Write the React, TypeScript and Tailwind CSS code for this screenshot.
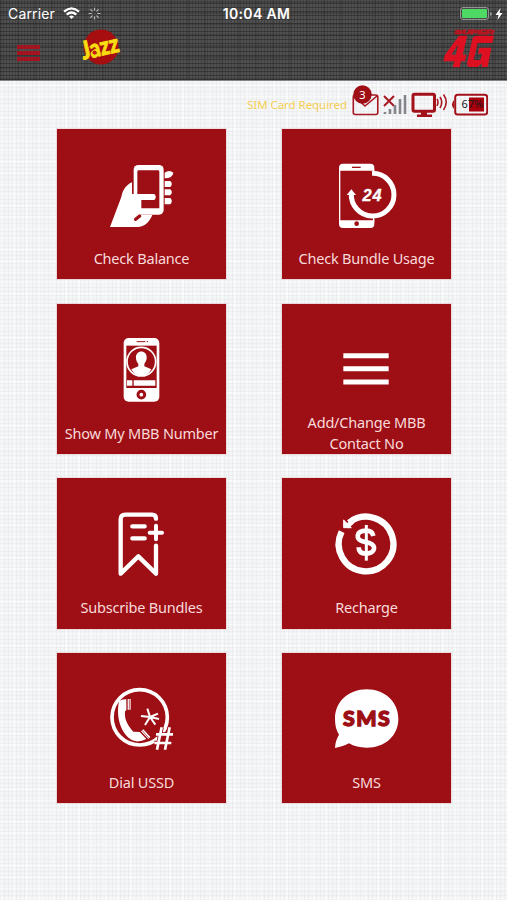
import type { ReactNode } from "react";
import { Loader } from "lucide-react";

type Tile = {
  label: string;
  icon: ReactNode;
};

const RED = "#9d0e15";

// All tile icons are drawn on the same 192 x 198 grid.
function TileIcon({ children }: { children: ReactNode }) {
  return (
    <svg
      width="64"
      height="66"
      viewBox="180 120 192 198"
      fill="none"
      stroke="none"
      className="mt-[33.500px] shrink-0 overflow-visible"
      aria-hidden="true"
    >
      {children}
    </svg>
  );
}

function BalanceIcon() {
  return (
    <TileIcon>
      <path
        d="M180 312L214 222C218 201 228 186 246 178V212L274 230V276H307C298 296 285 312 262 312Z"
        fill="#fff"
      />
      <rect x="251" y="126" width="90" height="149" rx="14" fill="#fff" />
      <path d="M266 142H324Q328 142 328 146V256H274V230H262V146Q262 142 266 142Z" fill={RED} />
      <path d="M247 213H313Q322 222 313 231H247Z" fill="#fff" />
      <path d="M257 289L269 279" stroke={RED} strokeWidth="10" strokeLinecap="round" />
      <path
        d="M344 149Q358 139 370 149Q368 166 344 166ZM344 174H361Q370 183 361 192H344ZM344 199H361Q370 208 361 217H344ZM344 225H361Q370 234 361 244H344Z"
        fill="#fff"
      />
    </TileIcon>
  );
}

function UsageIcon() {
  return (
    <TileIcon>
      <path
        d="M192 143V134Q192 122 204 122H286Q298 122 298 134V143ZM192 292H298V302Q298 315 286 315H204Q192 315 192 302Z"
        fill="#fff"
      />
      <path d="M194 140V296M296 140V155M296 280V296" stroke="#fff" strokeWidth="4" />
      <path d="M231 133H257" stroke={RED} strokeWidth="4" />
      <circle cx="245" cy="302" r="7" fill={RED} />
      <path d="M291 151A64 64 0 1 1 229 211" stroke="#fff" strokeWidth="15" />
      <path d="M215 216L229 199L243 216Z" fill="#fff" />
      <text
        x="291"
        y="235"
        textAnchor="middle"
        textLength="57"
        fill="#fff"
        stroke="#fff"
        strokeWidth="1"
        fontSize="49"
        className="font-['Liberation_Sans',sans-serif] font-bold italic"
      >
        24
      </text>
    </TileIcon>
  );
}

function NumberIcon() {
  return (
    <TileIcon>
      <rect x="221" y="123" width="107" height="191" rx="15" fill="#fff" />
      <rect x="229" y="146" width="91" height="127" fill={RED} />
      <path d="M260 134H286M290 134H294" stroke={RED} strokeWidth="3" />
      <circle cx="274" cy="194" r="43" stroke="#fff" strokeWidth="5" />
      <path
        d="M258 184C255 157 293 157 290 184C290 192 285 197 283 201V208L304 217Q294 237 274 237Q254 237 244 217L265 208V201C262 197 258 192 258 184Z"
        fill="#fff"
      />
      <path d="M231 250H247V266H231ZM251 250H316V266H251Z" fill="#fff" />
      <circle cx="274" cy="293" r="10" stroke={RED} strokeWidth="9" />
    </TileIcon>
  );
}

function MenuIcon() {
  return (
    <TileIcon>
      <path d="M205 176H341M205 215H341M205 255H341" stroke="#fff" strokeWidth="15" />
    </TileIcon>
  );
}

function SubscribeIcon() {
  return (
    <TileIcon>
      <g stroke="#fff" strokeWidth="13" strokeLinecap="round" strokeLinejoin="round">
        <path d="M318 140Q318 128 306 128H226Q212 128 212 142V305L265 253L318 305V221" />
        <path d="M247 163H284M247 199H284" />
        <path d="M318 161V202M299 182H336" strokeWidth="12" />
      </g>
    </TileIcon>
  );
}

function RechargeIcon() {
  return (
    <TileIcon>
      <path d="M200 179A82 82 0 1 0 222 152" stroke="#fff" strokeWidth="19" />
      <path d="M206 144V167H229Z" fill="#fff" stroke="#fff" strokeWidth="3" />
      <path d="M215 164L232 149" stroke="#fff" strokeWidth="14" />
      <path
        d="M295 192C293 180 286 176 273 176C242 176 242 203 262 208L283 213C306 220 300 245 273 245C258 245 251 238 251 226"
        stroke="#fff"
        strokeWidth="14"
      />
      <path d="M274 159V266" stroke="#fff" strokeWidth="9" />
    </TileIcon>
  );
}

function UssdIcon() {
  return (
    <TileIcon>
      <circle cx="269" cy="211" r="83" stroke="#fff" strokeWidth="11" />
      <path
        d="M207 163Q217 155 229 157V190L225 193C222 219 236 239 250 254L269 255L289 276Q267 288 247 280C213 262 197 210 207 163Z"
        fill="#fff"
      />
      <path d="M233 156H242V188H233ZM273 253L280 247L301 270L295 276Z" fill="#fff" />
      <path d="M238 157V188M276 250L297 274" stroke={RED} strokeWidth="2" />
      <path
        d="M300 210L292 185M300 210L324 200M300 210L327 216M300 210L285 234M300 210L273 207M300 210L316 233"
        stroke="#fff"
        strokeWidth="6"
      />
      <path
        d="M335 241L321 308M359 241L345 308M318 262H369M313 288H364"
        stroke={RED}
        strokeWidth="13"
      />
      <path
        d="M335 241L321 308M359 241L345 308M318 262H369M313 288H364"
        stroke="#fff"
        strokeWidth="8"
      />
    </TileIcon>
  );
}

function SmsIcon() {
  return (
    <TileIcon>
      <path
        d="M180 303C181 285 185 275 192 263C184 250 180 235 180 215C180 164 221 127 275 127C330 127 370 165 370 215C370 266 330 302 275 302C254 302 237 298 222 289C210 295 197 300 180 303Z"
        fill="#fff"
      />
      <text
        x="274"
        y="236"
        textAnchor="middle"
        textLength="140"
        fill={RED}
        stroke={RED}
        strokeWidth="4"
        fontSize="64"
        className="font-[Lato,sans-serif] font-black"
      >
        SMS
      </text>
    </TileIcon>
  );
}

const TILES: Tile[] = [
  { label: "Check Balance", icon: <BalanceIcon /> },
  { label: "Check Bundle Usage", icon: <UsageIcon /> },
  { label: "Show My MBB Number", icon: <NumberIcon /> },
  { label: "Add/Change MBB Contact No", icon: <MenuIcon /> },
  { label: "Subscribe Bundles", icon: <SubscribeIcon /> },
  { label: "Recharge", icon: <RechargeIcon /> },
  { label: "Dial USSD", icon: <UssdIcon /> },
  { label: "SMS", icon: <SmsIcon /> },
];

function JazzLogo() {
  return (
    <svg width="42" height="38" viewBox="0 0 42 38" className="overflow-visible" aria-label="Jazz">
      <circle cx="22" cy="19" r="17.5" fill="#a60e10" />
      <g transform="rotate(-13 20 20)">
        <text
          x="2"
          y="28"
          textLength="38"
          lengthAdjust="spacingAndGlyphs"
          fill="#f8dc12"
          stroke="#f8dc12"
          strokeWidth="0.9"
          fontSize="25"
          className="font-[Lato,sans-serif] font-black"
        >
          Jazz
        </text>
      </g>
      <circle cx="15.5" cy="24.5" r="2" fill="#c81a12" />
    </svg>
  );
}

function Super4G() {
  return (
    <svg width="52" height="40" viewBox="0 0 156 120" aria-label="Super 4G">
      <text
        x="34"
        y="16"
        textLength="118"
        lengthAdjust="spacingAndGlyphs"
        fill="#b51420"
        stroke="#b51420"
        strokeWidth="2.5"
        fontSize="18"
        className="font-['Liberation_Sans',sans-serif] font-bold italic"
      >
        SUPER
      </text>
      <path
        d="M48 20H73L59 77H70L66 97H54L50 115H29L34 97H1L6 77ZM38 77L46 45L25 77Z"
        fill="#dc1020"
        fillRule="evenodd"
      />
      <path
        d="M98 20H153L148 42H104L92 93H112L117 74H105L109 56H145L134 114H116L117 103L104 114H80Q70 111 73 98L87 34Q90 21 98 20Z"
        fill="#dc1020"
      />
    </svg>
  );
}

function StatusBar() {
  return (
    <div className="flex h-[27px] items-center px-2 font-[Inter,sans-serif] text-white">
      <div className="flex flex-1 items-center">
        <span className="text-[14px] tracking-[0.15px]">Carrier</span>
        <svg width="17" height="13" viewBox="0 0 17 13" fill="none" stroke="#fff" strokeWidth="2.3" className="ml-2">
          <path d="M1 4.700Q8.500 -2 16 4.700M3.700 7.600Q8.500 3.300 13.300 7.600" />
          <path d="M8.500 12L6 9.500Q8.500 7.500 11 9.500Z" fill="#fff" stroke="none" />
        </svg>
        <Loader className="ml-[8px] h-[13px] w-[13px] text-[#bcbcbc]" strokeWidth={2} />
      </div>
      <span className="translate-x-[3px] text-[14px] font-semibold tracking-[0.35px]">10:04 AM</span>
      <div className="flex flex-1 items-center justify-end">
        <div className="h-[13px] w-[29px] rounded-[3px] border border-[#8f9690] p-px">
          <div className="h-full w-[25px] rounded-[1px] bg-[#4cd964]" />
        </div>
        <div className="ml-px h-[4px] w-[2px] rounded-r bg-[#8f9690]" />
        <svg width="8" height="12" viewBox="0 0 8 12" className="ml-[3px] -mr-[4px]">
          <path d="M5.500 0L0.500 7H3.500L2.500 12L7.500 5H4.500Z" fill="#fff" />
        </svg>
      </div>
    </div>
  );
}

function DeviceStatus() {
  return (
    <div className="flex h-[48px] items-center justify-end pr-[19px]">
      <span className="mr-[3px] font-['Noto_Sans',sans-serif] text-[11.500px] tracking-[-0.05px] text-[#f5cf52]">
        SIM Card Required
      </span>
      <svg width="138" height="46" viewBox="350 82 138 46" className="shrink-0" aria-hidden="true">
        <rect x="353.3" y="95" width="24.5" height="19.5" rx="2" stroke="#a71822" strokeWidth="1.6" fill="none" />
        <path d="M354 96L365 106L377 96" stroke="#a71822" strokeWidth="1.6" fill="none" />
        <circle cx="362.5" cy="94.5" r="9.2" fill="#9d0e15" />
        <text
          x="362.5"
          y="98.5"
          textAnchor="middle"
          fill="#fff"
          fontSize="11"
          className="font-['Noto_Sans',sans-serif]"
        >
          3
        </text>
        <path d="M384 96L394 106M394 96L384 106" stroke="#a71822" strokeWidth="2" />
        <path
          d="M385 114V112M390 114V109M395 114V105M400 114V99M405 114V95"
          stroke="#85858b"
          strokeWidth="2.6"
        />
        <rect x="413" y="94.3" width="21.5" height="17" rx="1.5" stroke="#a3111a" strokeWidth="3" fill="none" />
        <path d="M421 112H427V114.5H432V117H417V114.5H421Z" fill="#a3111a" />
        <path
          d="M437 99Q439 102 437 106M440 97Q443.5 102 440 108M443.5 94.5Q449 102 443.5 110"
          stroke="#a71822"
          strokeWidth="1.6"
          fill="none"
        />
        <rect x="455.2" y="94.7" width="32" height="19.8" rx="2.5" stroke="#a3111a" strokeWidth="2" fill="none" />
        <path d="M454 100Q450 104.500 454 109Z" fill="#a3111a" />
        <rect x="469" y="97.500" width="15" height="14" fill="#a9000c" />
        <text
          x="461.500"
          y="108"
          textLength="22"
          fill="#211719"
          fontSize="11"
          className="font-['Noto_Sans',sans-serif]"
        >
          67%
        </text>
      </svg>
    </div>
  );
}

export default function App() {
  return (
    <div className="h-[900px] w-[507px] overflow-hidden bg-[#f4f5f6] bg-[repeating-linear-gradient(0deg,#cbced32c_0_1px,transparent_1px_4px),repeating-linear-gradient(90deg,#cbced32c_0_1px,transparent_1px_4px),repeating-linear-gradient(0deg,#ffffff80_0_2px,transparent_2px_11px),repeating-linear-gradient(90deg,#ffffff80_0_2px,transparent_2px_13px)]">
      <header className="h-[81px] border-b border-[#85838a] bg-[#505050] bg-[repeating-linear-gradient(0deg,#25252590_0_1px,transparent_1px_4px),repeating-linear-gradient(90deg,#25252555_0_1px,transparent_1px_3px),repeating-linear-gradient(0deg,#22222245_0_2px,transparent_2px_11px),repeating-linear-gradient(90deg,#22222230_0_2px,transparent_2px_17px)]">
        <StatusBar />
        <div className="flex items-start pl-[17px] pr-[12px]">
          <button type="button" aria-label="Menu" className="mt-[18px] flex flex-col gap-[2px]">
            <span className="h-[4px] w-[23px] bg-[#a31421]" />
            <span className="h-[4px] w-[23px] bg-[#a31421]" />
            <span className="h-[4px] w-[23px] bg-[#a31421]" />
          </button>
          <div className="ml-[39px] mt-px">
            <JazzLogo />
          </div>
          <div className="ml-auto mt-[2px]">
            <Super4G />
          </div>
        </div>
      </header>

      <DeviceStatus />

      <main className="grid grid-cols-[169px_169px] gap-x-[56px] gap-y-[24.300px] pl-[57px]">
        {TILES.map((tile) => (
          <button
            type="button"
            key={tile.label}
            className="flex h-[150.400px] flex-col items-center bg-[#9d0e15] outline outline-[#e5a5a950]"
          >
            {tile.icon}
            <span
              className={`font-['Noto_Sans',sans-serif] text-[14.500px] leading-[20.500px] tracking-[-0.2px] text-[#f9dadb] ${
                tile.label.startsWith("Add") ? "mt-[9px] w-[125px]" : "mt-[19.500px] whitespace-nowrap"
              }`}
            >
              {tile.label}
            </span>
          </button>
        ))}
      </main>
    </div>
  );
}
